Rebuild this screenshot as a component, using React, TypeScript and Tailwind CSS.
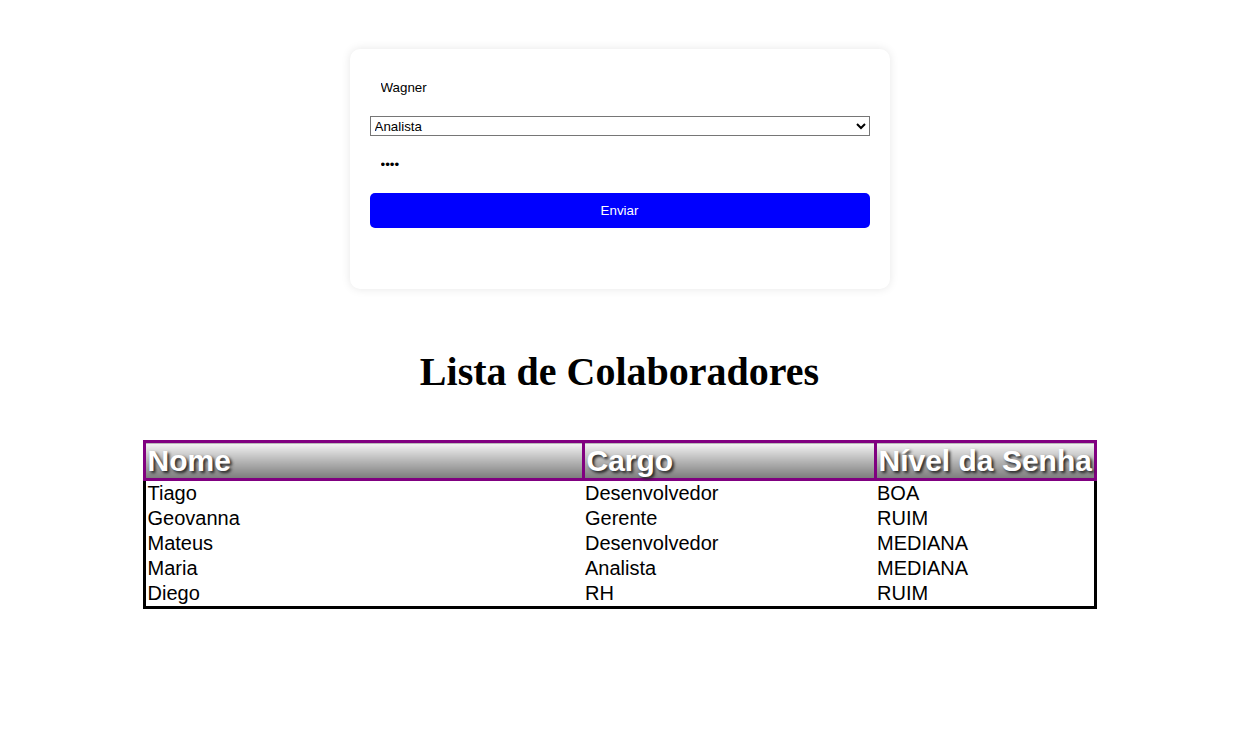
import React from "react";

const rows = [
  ["Tiago", "Desenvolvedor", "BOA"],
  ["Geovanna", "Gerente", "RUIM"],
  ["Mateus", "Desenvolvedor", "MEDIANA"],
  ["Maria", "Analista", "MEDIANA"],
  ["Diego", "RH", "RUIM"],
];

export default function App() {
  return (
    <div className="w-[1239px] bg-white pb-[140px] font-['Liberation_Sans',Arial,sans-serif] text-black">
      <div className="mx-auto mt-[49px] box-border h-[240px] w-[540px] rounded-[10px] bg-white p-5 shadow-[0_0_10px_rgba(0,0,0,0.1)]">
        <input
          type="text"
          defaultValue="Wagner"
          className="mb-[10px] block w-full border border-transparent p-[10px] text-[13.33px] leading-[15px] text-black outline-none"
        />
        <select
          defaultValue="Analista"
          className="mb-[10px] block h-[20px] w-full border border-[#767676] bg-white text-[13.33px] text-black"
        >
          <option>Desenvolvedor</option>
          <option>Gerente</option>
          <option>Analista</option>
          <option>RH</option>
        </select>
        <input
          type="password"
          defaultValue="1234"
          className="mb-[10px] block w-full border border-transparent p-[10px] text-[13.33px] leading-[15px] text-black outline-none"
        />
        <button className="block h-[35px] w-full rounded-[5px] bg-[#0000ff] text-[13.33px] text-white">
          Enviar
        </button>
      </div>

      <h1 className="mt-[60px] text-center font-['Liberation_Serif','Times_New_Roman',serif] text-[40px] leading-[46px] font-bold">
        Lista de Colaboradores
      </h1>

      <table className="mx-auto mt-[45px] w-[951px] table-fixed border-collapse border-[3px] border-black">
        <thead>
          <tr>
            <th className="w-[439px] border-[3px] border-[#800080] bg-gradient-to-b from-[#f4f4f4] to-[#7c7c7c] py-px pr-px pl-[2px] text-left text-[30px] leading-[33px] font-bold text-white [text-shadow:2px_2px_3px_#222]">
              Nome
            </th>
            <th className="w-[292px] border-[3px] border-[#800080] bg-gradient-to-b from-[#f4f4f4] to-[#7c7c7c] py-px pr-px pl-[2px] text-left text-[30px] leading-[33px] font-bold text-white [text-shadow:2px_2px_3px_#222]">
              Cargo
            </th>
            <th className="w-[220px] whitespace-nowrap border-[3px] border-[#800080] bg-gradient-to-b from-[#f4f4f4] to-[#7c7c7c] py-px pr-px pl-[2px] text-left text-[30px] leading-[33px] font-bold text-white [text-shadow:2px_2px_3px_#222]">
              Nível da Senha
            </th>
          </tr>
        </thead>
        <tbody>
          {rows.map((r) => (
            <tr key={r[0]}>
              <td className="py-px pr-px pl-[2px] text-[20px] leading-[23px]">{r[0]}</td>
              <td className="py-px pr-px pl-[2px] text-[20px] leading-[23px]">{r[1]}</td>
              <td className="py-px pr-px pl-[2px] text-[20px] leading-[23px]">{r[2]}</td>
            </tr>
          ))}
        </tbody>
      </table>
    </div>
  );
}
